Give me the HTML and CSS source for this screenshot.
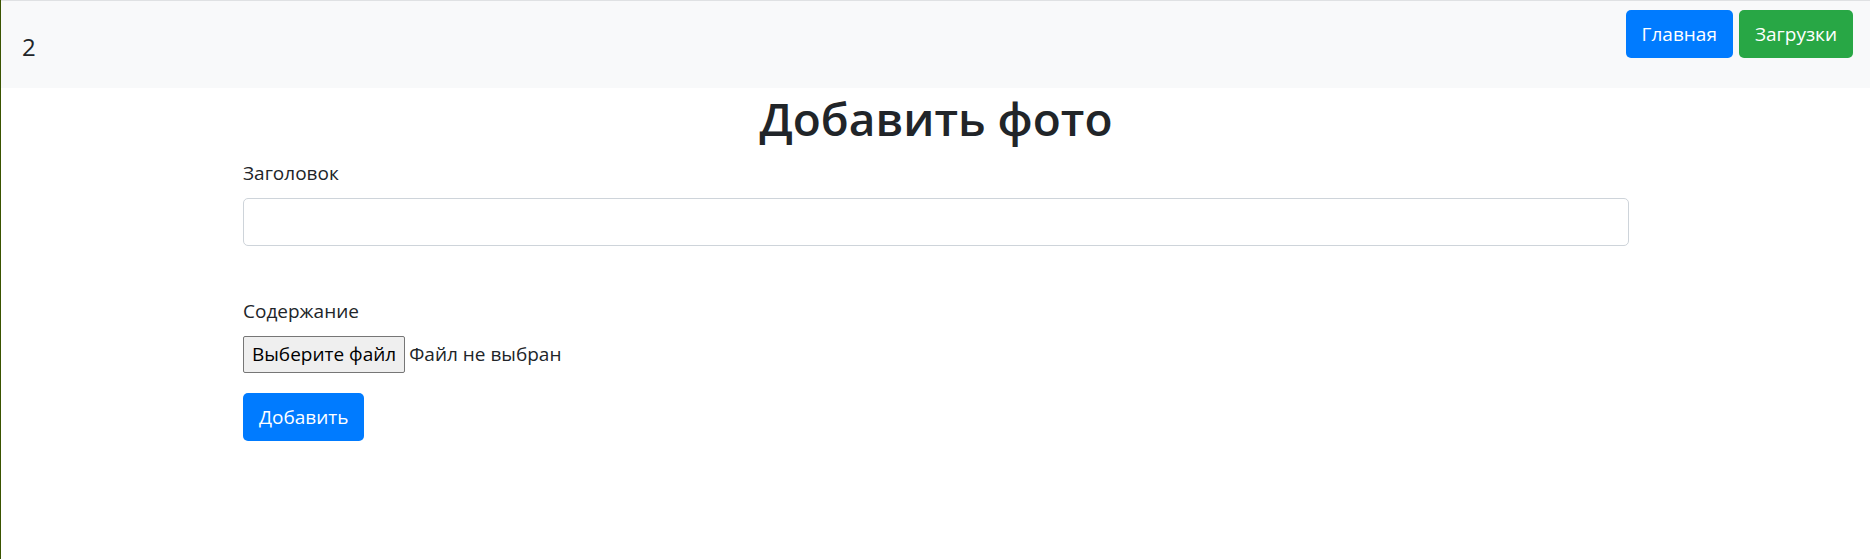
FILE: index.html
```html
<!DOCTYPE html>
<html lang="ru">
<head>
<meta charset="utf-8">
<title>Добавить фото</title>
<link rel="stylesheet" href="styles.css">
</head>
<body>
<nav class="navbar">
  <span class="brand">2</span>
  <div class="nav-actions">
    <a class="btn btn-primary nav-btn" href="#">Главная</a>
    <a class="btn btn-success nav-btn" href="#">Загрузки</a>
  </div>
</nav>
<main class="container">
  <h1 class="title">Добавить фото</h1>
  <form class="form">
    <div class="form-group">
      <label class="label" for="title">Заголовок</label>
      <input class="form-control" id="title" type="text">
    </div>
    <div class="form-group spaced">
      <label class="label">Содержание</label>
      <div class="file-input">
        <span class="file-btn">Выберите файл</span>
        <span class="file-name">Файл не выбран</span>
      </div>
    </div>
    <button class="btn btn-primary submit" type="button">Добавить</button>
  </form>
</main>
</body>
</html>
```
FILE: styles.css
```css
* { box-sizing: border-box; }
html, body { margin: 0; padding: 0; }
body {
  font-family: "Open Sans", "Noto Sans", sans-serif;
  font-size: 20px;
  line-height: 1.5;
  color: #212529;
  background: #fff;
  border-left: 1px solid #3a5400;
  min-height: 559px;
}
.navbar {
  display: flex;
  justify-content: space-between;
  align-items: flex-start;
  height: 88px;
  background: #f8f9fa;
  border-top: 1px solid #dfe1e3;
  padding: 9px 17px 0 21px;
}
.brand {
  align-self: center;
  font-size: 24px;
  line-height: 36px;
  margin-top: -4px;
}
.nav-actions {
  display: flex;
  gap: 6px;
}
.btn {
  display: inline-flex;
  align-items: center;
  justify-content: center;
  height: 48px;
  border: 0;
  border-radius: 5px;
  color: #fff;
  font-family: inherit;
  font-size: 19px;
  text-decoration: none;
  padding: 0 16px;
  cursor: pointer;
}
.btn-primary { background: #007bff; }
.btn-success { background: #28a745; }
.container {
  max-width: 1425px;
  margin: 0 auto;
  padding: 0 19px 0 20px;
}
.title {
  margin: 0 0 10px;
  text-align: center;
  font-size: 46px;
  font-weight: 600;
  line-height: 60px;
}
.form-group { margin-bottom: 20px; }
.form-group.spaced { margin-top: 50px; }
.label {
  display: block;
  font-size: 19px;
  line-height: 30px;
  margin-bottom: 10px;
}
.form-control {
  display: block;
  width: 100%;
  height: 48px;
  border: 1px solid #ced4da;
  border-radius: 5px;
  background: #fff;
  font: inherit;
  padding: 0 15px;
}
.file-input {
  display: flex;
  align-items: center;
  gap: 4px;
  height: 37px;
}
.file-btn {
  display: inline-flex;
  align-items: center;
  height: 37px;
  padding: 0 8px;
  background: #efefef;
  border: 1px solid #767676;
  border-radius: 2px;
  color: #000;
  font-size: 19px;
}
.file-name { font-size: 19px; }
.submit {
  padding: 0 16px;
  font-size: 19px;
}
```
